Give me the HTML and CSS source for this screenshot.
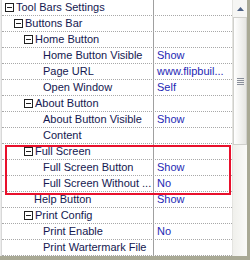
FILE: index.html
```html
<!DOCTYPE html>
<html lang="en">
<head>
  <meta charset="UTF-8">
  <title>Tool Bars Settings</title>
  <link rel="stylesheet" href="styles.css">
</head>
<body>
  <div class="panel">
    <div class="grid">
      <div class="row"><div class="name lv0"><span class="box"></span>Tool Bars Settings</div><div class="value"></div></div>
      <div class="row"><div class="name lv1"><span class="box"></span>Buttons Bar</div><div class="value"></div></div>
      <div class="row"><div class="name lv2"><span class="box"></span>Home Button</div><div class="value"></div></div>
      <div class="row"><div class="name leaf3">Home Button Visible</div><div class="value">Show</div></div>
      <div class="row"><div class="name leaf3">Page URL</div><div class="value">www.flipbuil...</div></div>
      <div class="row"><div class="name leaf3">Open Window</div><div class="value">Self</div></div>
      <div class="row"><div class="name lv2"><span class="box"></span>About Button</div><div class="value"></div></div>
      <div class="row"><div class="name leaf3">About Button Visible</div><div class="value">Show</div></div>
      <div class="row"><div class="name leaf3">Content</div><div class="value"></div></div>
      <div class="group-hl">
        <div class="row"><div class="name lv2"><span class="box"></span>Full Screen</div><div class="value"></div></div>
        <div class="row"><div class="name leaf3">Full Screen Button</div><div class="value">Show</div></div>
        <div class="row"><div class="name leaf3">Full Screen Without ...</div><div class="value">No</div></div>
      </div>
      <div class="row"><div class="name leaf2">Help Button</div><div class="value">Show</div></div>
      <div class="row"><div class="name lv2"><span class="box"></span>Print Config</div><div class="value"></div></div>
      <div class="row"><div class="name leaf3">Print Enable</div><div class="value">No</div></div>
      <div class="row"><div class="name leaf3">Print Wartermark File</div><div class="value"></div></div>
    </div>
    <div class="scrollbar">
      <div class="arrow"><svg width="7" height="4" viewBox="0 0 7 4"><path d="M0 4h7L3.5 0z" fill="#4d6185"/></svg></div>
      <div class="thumb"><span class="grip"></span><span class="grip"></span><span class="grip"></span><span class="grip"></span></div>
      <div class="track"></div>
    </div>
  </div>
</body>
</html>
```

FILE: styles.css
```css
body {
  margin: 0;
  background: #ffffff;
}
.panel {
  width: 250px;
  height: 260px;
  display: flex;
  box-sizing: border-box;
  border-right: 3px solid #a9a995;
  border-bottom: 4px solid #a9a995;
  overflow: hidden;
  font-family: "Liberation Sans", Arial, sans-serif;
  font-size: 11px;
}
.grid {
  width: 232px;
  flex-shrink: 0;
  box-sizing: border-box;
  border-left: 1px solid #ececec;
  box-shadow: inset 1px 0 0 #d8d8d8;
  padding-left: 1px;
}
.row {
  display: flex;
  height: 16px;
  box-sizing: border-box;
  border-bottom: 1px dotted #a8a8a8;
  line-height: 15px;
}
.name {
  width: 152px;
  flex-shrink: 0;
  box-sizing: border-box;
  display: flex;
  align-items: center;
  color: #141850;
  white-space: nowrap;
  overflow: hidden;
  border-right: 1px solid #a0a0a0;
}
.value {
  flex: 1;
  padding-left: 3px;
  color: #1e28b4;
  white-space: nowrap;
  overflow: hidden;
}
.lv0 { padding-left: 3px; }
.lv1 { padding-left: 12px; }
.lv2 { padding-left: 22px; }
.leaf2 { padding-left: 32px; }
.leaf3 { padding-left: 41px; }
.box {
  width: 9px;
  height: 9px;
  box-sizing: border-box;
  border: 1px solid #202020;
  margin-right: 2px;
  position: relative;
  flex-shrink: 0;
}
.box::after {
  content: "";
  position: absolute;
  left: 1px;
  top: 3px;
  width: 5px;
  height: 1px;
  background: #202020;
}
.group-hl {
  position: relative;
}
.group-hl::after {
  content: "";
  position: absolute;
  left: 3px;
  right: 1px;
  top: 1px;
  bottom: -3px;
  border: 2px solid #e8102c;
  pointer-events: none;
}
.scrollbar {
  width: 15px;
  display: flex;
  flex-direction: column;
  background: #f3f3ef;
  border-left: 1px solid #e4e4e0;
}
.arrow {
  height: 17px;
  display: flex;
  align-items: center;
  justify-content: center;
  background: #f6f6f4;
}
.thumb {
  height: 128px;
  box-sizing: border-box;
  border: 1px solid #d0d0cc;
  background: linear-gradient(to right, #ffffff, #e6e6e2);
  display: flex;
  flex-direction: column;
  align-items: center;
  justify-content: center;
  gap: 1px;
}
.grip {
  width: 7px;
  height: 1px;
  background: #8a8f9a;
}
.track {
  flex: 1;
  background: linear-gradient(to right, #f0f0ec, #fafaf8);
}
```
